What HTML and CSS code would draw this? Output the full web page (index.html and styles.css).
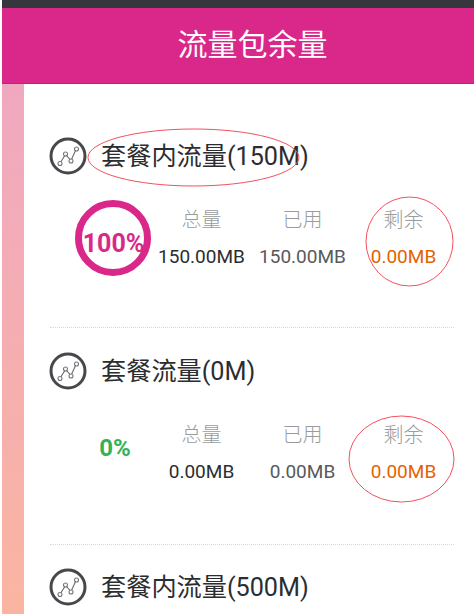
FILE: index.html
```html
<!DOCTYPE html>
<html lang="zh">
<head>
<meta charset="utf-8">
<title>流量包余量</title>
<link rel="stylesheet" href="styles.css">
</head>
<body>
<div class="screen">
  <div class="statusbar"></div>
  <header class="header">流量包余量</header>
  <div class="body">
    <div class="rail"></div>
    <main class="content">
      <section class="pack">
        <h2 class="pack-title">
          <svg class="icon" viewBox="0 0 38 38"><circle cx="19" cy="19" r="17" class="icon-ring"/><path class="icon-line" d="M11.500 25.500L16.500 17.500L22 23.500L27 12.500"/><circle class="icon-dot" cx="11" cy="26.500" r="2"/><circle class="icon-dot" cx="16.500" cy="17" r="2"/><circle class="icon-dot" cx="22" cy="24" r="2"/><circle class="icon-dot" cx="27.500" cy="12" r="2"/></svg>
          <span class="pack-name">套餐内流量(150M)</span>
        </h2>
        <div class="stats">
          <div class="gauge gauge-full">100%</div>
          <div class="stat"><span class="label">总量</span><span class="value value-total">150.00MB</span></div>
          <div class="stat"><span class="label">已用</span><span class="value value-used">150.00MB</span></div>
          <div class="stat"><span class="label">剩余</span><span class="value value-left">0.00MB</span></div>
        </div>
      </section>
      <section class="pack">
        <h2 class="pack-title">
          <svg class="icon" viewBox="0 0 38 38"><circle cx="19" cy="19" r="17" class="icon-ring"/><path class="icon-line" d="M11.500 25.500L16.500 17.500L22 23.500L27 12.500"/><circle class="icon-dot" cx="11" cy="26.500" r="2"/><circle class="icon-dot" cx="16.500" cy="17" r="2"/><circle class="icon-dot" cx="22" cy="24" r="2"/><circle class="icon-dot" cx="27.500" cy="12" r="2"/></svg>
          <span class="pack-name">套餐流量(0M)</span>
        </h2>
        <div class="stats">
          <div class="gauge gauge-zero">0%</div>
          <div class="stat"><span class="label">总量</span><span class="value value-total">0.00MB</span></div>
          <div class="stat"><span class="label">已用</span><span class="value value-used">0.00MB</span></div>
          <div class="stat"><span class="label">剩余</span><span class="value value-left">0.00MB</span></div>
        </div>
      </section>
      <section class="pack">
        <h2 class="pack-title">
          <svg class="icon" viewBox="0 0 38 38"><circle cx="19" cy="19" r="17" class="icon-ring"/><path class="icon-line" d="M11.500 25.500L16.500 17.500L22 23.500L27 12.500"/><circle class="icon-dot" cx="11" cy="26.500" r="2"/><circle class="icon-dot" cx="16.500" cy="17" r="2"/><circle class="icon-dot" cx="22" cy="24" r="2"/><circle class="icon-dot" cx="27.500" cy="12" r="2"/></svg>
          <span class="pack-name">套餐内流量(500M)</span>
        </h2>
      </section>
    </main>
  </div>
  <svg class="markup" viewBox="0 0 474 614">
    <ellipse cx="193.500" cy="157.500" rx="105.500" ry="28.500"/>
    <ellipse cx="409.500" cy="241.500" rx="43.500" ry="44.500"/>
    <ellipse cx="401.500" cy="459" rx="52.500" ry="43"/>
  </svg>
</div>
</body>
</html>
```
FILE: styles.css
```css
* { box-sizing: border-box; }
html, body { margin: 0; padding: 0; background: #fff; }
.screen {
  position: relative;
  width: 474px;
  height: 614px;
  overflow: hidden;
  padding-left: 2px;
  font-family: Roboto, "Noto Sans CJK SC", sans-serif;
  display: flex;
  flex-direction: column;
}
.statusbar { height: 8px; background: #36373d; flex: none; }
.header {
  height: 76px;
  flex: none;
  background: #d9288a;
  border-bottom: 1px solid #c81f7c;
  color: #fff;
  font-size: 30px;
  line-height: 74px;
  text-align: center;
  padding-left: 29px;
}
.body { flex: 1; display: flex; min-height: 0; }
.rail {
  width: 22px;
  flex: none;
  background: linear-gradient(#f0a8c0, #fab5a1);
}
.content { flex: 1; padding: 0 20px 0 26px; min-width: 0; }
.pack {
  height: 217px;
  padding-top: 24px;
  border-bottom: 1px dotted #d8d8d8;
}
.pack:first-child { height: 244px; padding-top: 53px; }
.pack:last-child { border-bottom: 0; padding-top: 23px; }
.pack-title {
  margin: 0;
  display: flex;
  align-items: center;
  gap: 14px;
  height: 38px;
  font-size: 25.200px;
  font-weight: 400;
  color: #2b2d30;
}
.pack-name { margin-bottom: 4px; }
.icon { width: 38px; height: 38px; flex: none; margin-left: -1px; }
.icon-ring { fill: none; stroke: #46484b; stroke-width: 3; }
.icon-line { fill: none; stroke: #6a6c6f; stroke-width: 1.100; }
.icon-dot { fill: #fff; stroke: #75777a; stroke-width: 1.100; }
.stats {
  display: grid;
  grid-template-columns: 76px repeat(3, 101px);
  margin-top: 25px;
  padding-left: 25px;
  align-items: start;
}
.gauge {
  width: 76px;
  height: 76px;
  display: flex;
  align-items: center;
  justify-content: center;
  font-weight: 700;
  font-size: 25px;
  white-space: nowrap;
}
.gauge-full {
  border: 7px solid #d9288a;
  border-radius: 50%;
  padding: 10px 0 0 1px;
  color: #d9288a;
}
.gauge-zero { color: #34b258; font-size: 24px; padding: 0 0 10px 4px; }
.stat { display: flex; flex-direction: column; align-items: center; padding-top: 6px; }
.label { font-size: 20px; font-weight: 300; line-height: 28px; color: #989c9d; }
.value { margin-top: 9px; font-size: 19px; font-weight: 400; line-height: 28px; }
.value-total { color: #2b2d2f; }
.value-used { color: #585a5c; }
.value-left { color: #e36300; }
.markup {
  position: absolute;
  left: 0;
  top: 0;
  width: 474px;
  height: 614px;
  pointer-events: none;
}
.markup ellipse { fill: none; stroke: #f4505e; stroke-width: 1; }
```
